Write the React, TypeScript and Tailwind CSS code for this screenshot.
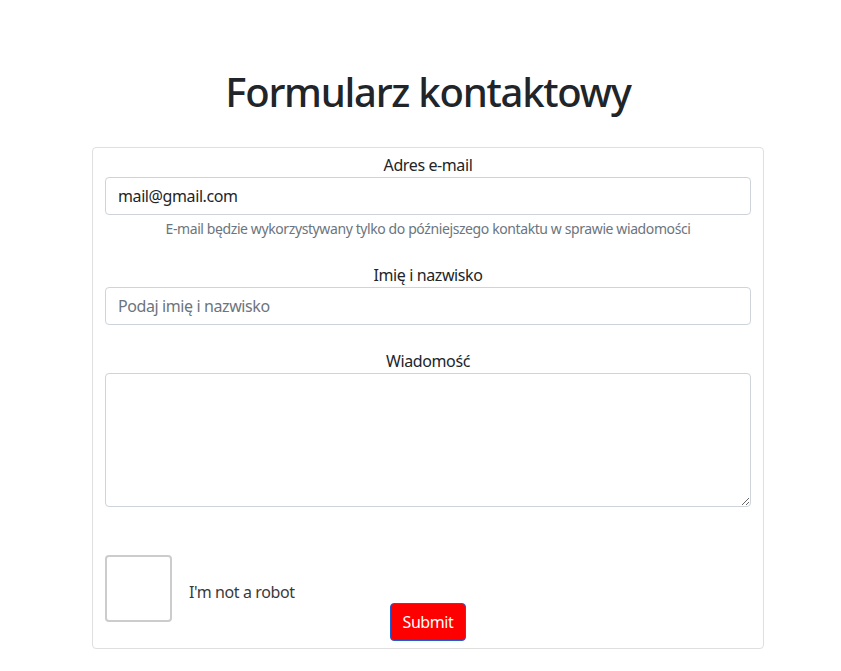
import React from "react";

const font = { fontFamily: '"Noto Sans", "Open Sans", sans-serif' };

export default function App() {
    return (
        <div className="min-h-screen bg-white text-[#212529]" style={font}>
            <div className="ml-[92px] w-[672px] pt-[68px]">
                <h1 className="text-center text-[40px] leading-[48px] font-medium tracking-[-1.25px]">Formularz kontaktowy</h1>

                <form className="mt-[31px] border border-[#dfdfdf] rounded-[4px] px-[12px] pt-[5px] pb-[7px] tracking-[-0.4px]">
                    {/* email */}
                    <label className="block text-center text-[16px] leading-[24px]">Adres e-mail</label>
                    <input
                        type="email"
                        defaultValue="mail@gmail.com"
                        className="block w-full h-[38px] border border-[#ced4da] rounded-[4px] px-[12px] text-[16px] text-[#212529] tracking-[-0.4px] outline-none"
                    />
                    <p className="mt-[3px] text-center text-[14px] leading-[21px] text-[#6c757d]">
                        E-mail będzie wykorzystywany tylko do późniejszego kontaktu w sprawie wiadomości
                    </p>

                    {/* name */}
                    <label className="mt-[24px] block text-center text-[16px] leading-[24px]">Imię i nazwisko</label>
                    <input
                        type="text"
                        placeholder="Podaj imię i nazwisko"
                        className="block w-full h-[38px] border border-[#ced4da] rounded-[4px] px-[12px] text-[16px] tracking-[-0.4px] placeholder:text-[#6c757d] outline-none"
                    />

                    {/* message */}
                    <label className="mt-[24px] block text-center text-[16px] leading-[24px]">Wiadomość</label>
                    <textarea className="block w-full h-[134px] border border-[#ced4da] rounded-[4px] px-[12px] py-[6px] text-[16px] outline-none" />

                    {/* captcha */}
                    <div className="mt-[48px] flex items-end">
                        <div className="w-[67px] h-[67px] border-2 border-[#cccccc] rounded-[4px]" />
                        <span className="ml-[17px] mb-[18px] text-[16px] leading-[24px] text-[#3a3a3a]">I'm not a robot</span>
                    </div>

                    <div className="-mt-[19px] flex justify-center">
                        <button
                            type="button"
                            className="h-[38px] px-[12px] bg-[#ff0000] text-white text-[16px] tracking-[-0.4px] border border-[#1a5fd6] rounded-[4px]"
                        >
                            Submit
                        </button>
                    </div>
                </form>
            </div>
        </div>
    );
}
